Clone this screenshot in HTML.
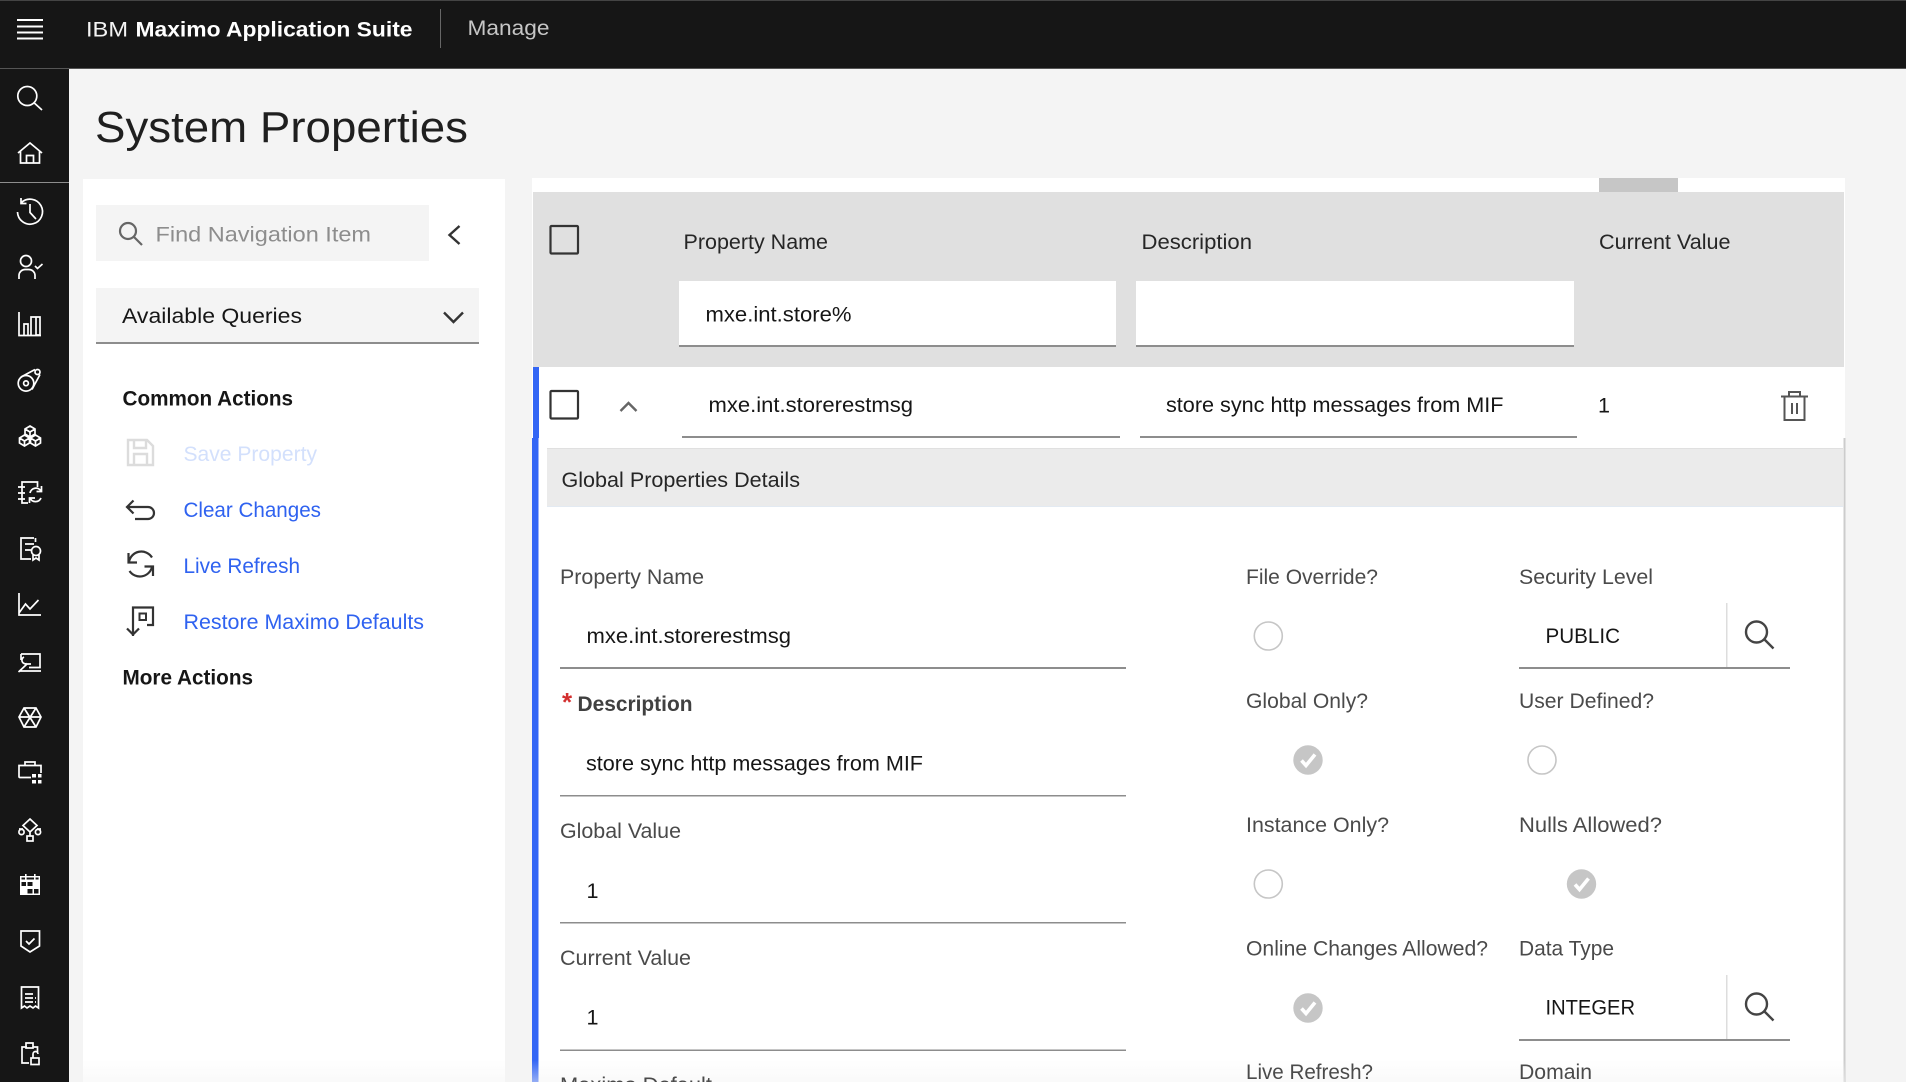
<!DOCTYPE html>
<html lang="en">
<head>
<meta charset="utf-8">
<title>System Properties</title>
<style>
html,body{margin:0;padding:0;width:1906px;height:1082px;overflow:hidden;background:#f4f4f4}
svg{display:block}
text{font-family:"Liberation Sans",Arial,sans-serif;font-size:21px;fill:#161616;white-space:pre}
.lab{fill:#4a4a4a}
.hd{fill:#262626}
.link{fill:#2f62f0}
.ic{fill:none;stroke:#fff;stroke-width:1.7;stroke-linecap:butt;stroke-linejoin:miter}
.dk{fill:none;stroke:#333;stroke-width:2.2}
.ul{fill:#8d8d8d}
.radio{fill:#fff;stroke:#c6c6c6;stroke-width:1.6}
.chk{fill:#c6c6c6}
.tick{fill:none;stroke:#fff;stroke-width:3.6}
</style>
</head>
<body>
<svg width="1906" height="1082" viewBox="0 0 1906 1082" xmlns="http://www.w3.org/2000/svg">
<defs>
<linearGradient id="fade" x1="0" y1="0" x2="0" y2="1"><stop offset="0" stop-color="#f4f4f4" stop-opacity="0"/><stop offset="1" stop-color="#f4f4f4" stop-opacity=".5"/></linearGradient>
</defs>
<rect width="1906" height="1082" fill="#f4f4f4"/>

<!-- top bar -->
<rect width="1906" height="69" fill="#161616"/>
<rect width="1906" height="1" fill="#444"/>
<rect y="68" width="1906" height="1" fill="#555"/>
<g fill="#fff"><rect x="17" y="19" width="26" height="2"/><rect x="17" y="25.500" width="26" height="2"/><rect x="17" y="31.500" width="26" height="2"/><rect x="17" y="37.500" width="26" height="2"/></g>
<text x="86" y="36.500" textLength="42" lengthAdjust="spacingAndGlyphs" style="fill:#f4f4f4">IBM</text>
<text x="135.500" y="36.500" textLength="277" lengthAdjust="spacingAndGlyphs" style="fill:#fff;font-weight:700">Maximo Application Suite</text>
<rect x="440" y="9" width="1" height="39" fill="#666"/>
<text x="467.500" y="35" textLength="82" lengthAdjust="spacingAndGlyphs" style="fill:#c6c6c6">Manage</text>

<!-- page title -->
<text x="95" y="142" textLength="373" lengthAdjust="spacingAndGlyphs" style="font-size:44px;fill:#1f1f1f">System Properties</text>

<!-- left rail -->
<rect y="69" width="69" height="1013" fill="#161616"/>
<rect y="182" width="69" height="1" fill="#8d8d8d"/>
<g class="ic">
<circle cx="27.300" cy="96" r="9.500"/><path d="M34.300 103 L42 110"/>
<path d="M18 153 L30 143 L42 153 M20.500 151 V163 H39.500 V151 M26.500 163 V155.500 H33.500 V163"/>
<path d="M21.500 202.500 A12.500 12.500 0 1 1 17.500 212 M21 198 V203.500 H26.500 M30 204 V212.500 L36 219"/>
<circle cx="26" cy="261" r="5.500"/><path d="M19 279 V275 A6 6 0 0 1 25 269.500 H29 A6 6 0 0 1 35 275 V279 M35 266 L37.500 268.500 L42.500 264"/>
<path d="M19 312 V335.500 H41 M24 335 V324 H28 V335 M31 335 V317 H36 V335 M36 335 H40 V317 H36"/>
<circle cx="26" cy="383.300" r="7.800"/><circle cx="26" cy="383.300" r="2.400"/><circle cx="37.500" cy="372" r="2.500"/><path d="M21 377 L35 369.500 M32 389.500 L40 374.500"/>
<path d="M30 426 L35 429 V434 L30 437 L25 434 V429 Z M24.500 435 L29.500 438 V443 L24.500 446 L19.500 443 V438 Z M35.500 435 L40.500 438 V443 L35.500 446 L30.500 443 V438 Z M25 429 L30 432 L35 429 M30 432 V437 M19.500 438 L24.500 441 L29.500 438 M24.500 441 V446 M30.500 438 L35.500 441 L40.500 438 M35.500 441 V446"/>
<path d="M37.500 487 V482 H22 V503 H28 M18 487 H25 M18 493 H25 M18 499 H25"/>
<path d="M30 493 A6 6 0 0 1 41 491 M41 498 A6 6 0 0 1 30 498 M36.500 491.500 H41.500 V486 M35 498 H29.500 V503"/>
<path d="M34 538 H21 V559 H31 M25 544 H34 M25 550 H31 M35.500 542 V538"/>
<circle cx="36" cy="551" r="4.500"/><path d="M33 555 V560 L36 558 L39 560 V555"/>
<path d="M19 593 V615 H41 M19 613 L25.500 604 L30 609 L38.500 600"/>
<path d="M21 654 H40 V667.500 H29 M21 654 V660 M19 671 H41 M18.500 672 L27 664 M24 657 A3.500 3.500 0 0 0 27 663.500 M27 664 L31 664"/>
<path d="M24 708 H36 L41 717 L36 727 H24 L19 717 Z M19 717 H41 M24 708 L36 727 M36 708 L24 727"/>
<path d="M31 777.500 H20 A1 1 0 0 1 19 776.500 V765.500 H41 V773 M25 765 V762 H35 V765"/>
<path d="M30 819 L37 825.500 L30 832 L23 825.500 Z M30 832 V836 M23 829 H19 M37 829 H41" />
<circle cx="21.500" cy="832" r="2.600"/><circle cx="38" cy="832" r="2.600"/><rect x="27" y="836" width="6" height="5"/>
<path d="M21 931 H39.500 V946 L30 952 L21 946 Z M26 941 L29 944 L34.500 938.500"/>
<path d="M21.500 987 H38.500 V1008 L35.500 1006 L33 1008 L30 1006 L27 1008 L24.500 1006 L21.500 1008 Z M25 994 H33 M25 998 H33 M25 1002 H33 M35 998 H36 M35 1002 H36"/>
<path d="M27 1047 H22 V1063 H29 M33 1047 H37.500 V1052 M26 1043 H33 V1048 H26 Z"/>
<rect x="31" y="1058" width="8" height="6.500"/><path d="M33 1058 V1054 A2.500 2.500 0 0 1 38 1054"/>
</g>
<g fill="#fff"><rect x="32" y="774" width="4" height="3.500"/><rect x="38" y="774" width="3.500" height="3.500"/><rect x="32" y="780" width="4" height="3.500"/><rect x="38" y="780" width="3.500" height="3.500"/></g>
<!-- calendar -->
<rect x="20" y="876" width="20" height="19" fill="#fff"/>
<rect x="25" y="874" width="1.600" height="4" fill="#fff"/><rect x="34" y="874" width="1.600" height="4" fill="#fff"/>
<g fill="#161616"><rect x="21.500" y="877.500" width="3.500" height="2"/><rect x="26.600" y="877.500" width="7.400" height="2"/><rect x="35.600" y="877.500" width="3" height="2"/><rect x="21.500" y="882" width="4.500" height="4"/><rect x="27.500" y="882" width="5" height="4"/><rect x="27.500" y="889" width="5" height="4.500"/><rect x="34" y="889" width="4.500" height="4.500"/></g>

<!-- left panel -->
<rect x="83" y="179" width="422" height="903" fill="#fff"/>
<rect x="96" y="205" width="333" height="56" fill="#f4f4f4"/>
<g fill="none" stroke="#666" stroke-width="2.200"><circle cx="128" cy="231" r="8"/><path d="M134 237 L142 245"/></g>
<text x="155.500" y="241.500" textLength="215.500" lengthAdjust="spacingAndGlyphs" style="fill:#8d8d8d">Find Navigation Item</text>
<path d="M459.500 226 L449.500 235 L459.500 244" fill="none" stroke="#333" stroke-width="2.400"/>
<rect x="96" y="288" width="383" height="54" fill="#f4f4f4"/>
<rect x="96" y="342" width="383" height="2" fill="#8d8d8d"/>
<text x="122" y="323" textLength="180" lengthAdjust="spacingAndGlyphs">Available Queries</text>
<path d="M444 312.500 L453.500 322 L463 312.500" fill="none" stroke="#333" stroke-width="2.400"/>

<text x="122.500" y="405.500" textLength="170.500" lengthAdjust="spacingAndGlyphs" style="font-weight:700">Common Actions</text>
<g fill="none" stroke="#dcdcdc" stroke-width="2.400"><path d="M128 440 H147 L153 446 V465 H128 Z M134 440 V448 H146 V440 M134 465 V454 H147 V465"/></g>
<text x="183.500" y="461" textLength="133.500" lengthAdjust="spacingAndGlyphs" style="fill:#d3e0fc">Save Property</text>
<path class="dk" d="M133.500 500.500 L127 507 L133.500 513.500 M127 507 H148 A6 6 0 0 1 148 519 H135"/>
<text class="link" x="183.500" y="517" textLength="137.500" lengthAdjust="spacingAndGlyphs">Clear Changes</text>
<path class="dk" d="M129 562 A12.500 12.500 0 0 1 152 557.500 M152 567 A12.500 12.500 0 0 1 129.500 571 M128.500 553 V562.500 H137 M153 576 V566.500 H144.500"/>
<text class="link" x="183.500" y="573" textLength="116.500" lengthAdjust="spacingAndGlyphs">Live Refresh</text>
<path class="dk" d="M133 636 V607.500 H153 V625 H147 M127 628.500 L133 634.500 L139 628.500"/>
<rect x="139.500" y="613.500" width="6.500" height="6.500" fill="none" stroke="#333" stroke-width="2"/>
<text class="link" x="183.500" y="629" textLength="240.500" lengthAdjust="spacingAndGlyphs">Restore Maximo Defaults</text>
<text x="122.500" y="684.500" textLength="130.500" lengthAdjust="spacingAndGlyphs" style="font-weight:700">More Actions</text>

<!-- right panel -->
<rect x="532" y="178" width="1313" height="904" fill="#fff"/>
<rect x="1599" y="178" width="79" height="14" fill="#c6c6c6"/>
<rect x="533" y="192" width="1311" height="175" fill="#e0e0e0"/>
<rect x="550.500" y="226" width="27.500" height="27.500" rx="1" fill="#e0e0e0" stroke="#333" stroke-width="2.200"/>
<text class="hd" x="683.500" y="249" textLength="144.500" lengthAdjust="spacingAndGlyphs">Property Name</text>
<text class="hd" x="1141.500" y="249" textLength="110.500" lengthAdjust="spacingAndGlyphs">Description</text>
<text class="hd" x="1599" y="249" textLength="131.500" lengthAdjust="spacingAndGlyphs">Current Value</text>
<rect x="679" y="281" width="437" height="64" fill="#fff"/><rect class="ul" x="679" y="345" width="437" height="2"/>
<rect x="1136" y="281" width="438" height="64" fill="#fff"/><rect class="ul" x="1136" y="345" width="438" height="2"/>
<text x="705.500" y="321.500" textLength="146" lengthAdjust="spacingAndGlyphs">mxe.int.store%</text>

<rect x="533" y="367" width="6" height="71" fill="#3366f5"/>
<rect x="550.500" y="391" width="27.500" height="27.500" rx="1" fill="#fff" stroke="#333" stroke-width="2.200"/>
<path d="M620.500 411 L628.500 403 L636.500 411" fill="none" stroke="#666" stroke-width="2.400"/>
<text x="708.500" y="412" textLength="204.500" lengthAdjust="spacingAndGlyphs">mxe.int.storerestmsg</text>
<rect class="ul" x="682" y="436" width="438" height="2"/>
<text x="1166" y="412" textLength="337.500" lengthAdjust="spacingAndGlyphs">store sync http messages from MIF</text>
<rect class="ul" x="1140" y="436" width="437" height="2"/>
<text x="1598" y="412.500" textLength="12" lengthAdjust="spacingAndGlyphs">1</text>
<path d="M1781 396.500 H1808 M1789 396 V392 H1800 V396 M1784.500 397 V420 H1804.500 V397 M1792 403 V414 M1797 403 V414" fill="none" stroke="#555" stroke-width="2"/>

<!-- details section -->
<rect x="532" y="438" width="6.500" height="644" fill="#3366f5"/>
<rect x="1843.500" y="438" width="2" height="644" fill="#ccc"/>
<rect x="547" y="448" width="1296" height="59" fill="#ebebeb"/>
<rect x="547" y="448" width="1296" height="1" fill="#e0e0e0"/>
<rect x="547" y="506" width="1296" height="1" fill="#e3eaf2"/>
<text class="hd" x="561.500" y="487" textLength="238.500" lengthAdjust="spacingAndGlyphs">Global Properties Details</text>

<text class="lab" x="560" y="584" textLength="144" lengthAdjust="spacingAndGlyphs">Property Name</text>
<text x="586.500" y="643" textLength="204.500" lengthAdjust="spacingAndGlyphs">mxe.int.storerestmsg</text>
<rect class="ul" x="560" y="667" width="566" height="2"/>
<text x="562" y="711" style="fill:#d32f2f;font-size:26px;font-weight:700">*</text>
<text x="577.500" y="711" textLength="115" lengthAdjust="spacingAndGlyphs" style="fill:#404040;font-weight:700">Description</text>
<text x="586" y="770.500" textLength="337" lengthAdjust="spacingAndGlyphs">store sync http messages from MIF</text>
<rect class="ul" x="560" y="795" width="566" height="1.500"/>
<text class="lab" x="560" y="838" textLength="121" lengthAdjust="spacingAndGlyphs">Global Value</text>
<text x="586.500" y="898" textLength="12" lengthAdjust="spacingAndGlyphs">1</text>
<rect class="ul" x="560" y="922" width="566" height="1.500"/>
<text class="lab" x="560" y="965" textLength="131" lengthAdjust="spacingAndGlyphs">Current Value</text>
<text x="586.500" y="1024.500" textLength="12" lengthAdjust="spacingAndGlyphs">1</text>
<rect class="ul" x="560" y="1049.500" width="566" height="1.500"/>

<text class="lab" x="1246" y="584" textLength="132" lengthAdjust="spacingAndGlyphs">File Override?</text>
<circle class="radio" cx="1268.300" cy="636" r="14"/>
<text class="lab" x="1519" y="584" textLength="134" lengthAdjust="spacingAndGlyphs">Security Level</text>
<text x="1545.500" y="643" textLength="74.500" lengthAdjust="spacingAndGlyphs">PUBLIC</text>
<rect x="1726" y="603" width="1.500" height="64" fill="#ddd"/>
<g fill="none" stroke="#444" stroke-width="2.400"><circle cx="1756.500" cy="632" r="10.500"/><path d="M1764.500 639.500 L1773.500 648.500"/></g>
<rect class="ul" x="1519" y="667" width="271" height="2"/>

<text class="lab" x="1246" y="708" textLength="122" lengthAdjust="spacingAndGlyphs">Global Only?</text>
<circle class="chk" cx="1308" cy="760" r="14.700"/><path class="tick" d="M1301.500 760.500 L1306 765.500 L1315 754.500"/>
<text class="lab" x="1519" y="708" textLength="135" lengthAdjust="spacingAndGlyphs">User Defined?</text>
<circle class="radio" cx="1542" cy="760" r="14"/>

<text class="lab" x="1246" y="832" textLength="143" lengthAdjust="spacingAndGlyphs">Instance Only?</text>
<circle class="radio" cx="1268.300" cy="884" r="14"/>
<text class="lab" x="1519" y="832" textLength="143" lengthAdjust="spacingAndGlyphs">Nulls Allowed?</text>
<circle class="chk" cx="1581.500" cy="884" r="14.700"/><path class="tick" d="M1575 884.500 L1579.500 889.500 L1588.500 878.500"/>

<text class="lab" x="1246" y="955.500" textLength="242" lengthAdjust="spacingAndGlyphs">Online Changes Allowed?</text>
<circle class="chk" cx="1308" cy="1008" r="14.700"/><path class="tick" d="M1301.500 1008.500 L1306 1013.500 L1315 1002.500"/>
<text class="lab" x="1519" y="955.500" textLength="95" lengthAdjust="spacingAndGlyphs">Data Type</text>
<text x="1545.500" y="1014.500" textLength="89.500" lengthAdjust="spacingAndGlyphs">INTEGER</text>
<rect x="1726" y="975" width="1.500" height="64" fill="#ddd"/>
<g fill="none" stroke="#444" stroke-width="2.400"><circle cx="1756.500" cy="1004" r="10.500"/><path d="M1764.500 1011.500 L1773.500 1020.500"/></g>
<rect class="ul" x="1519" y="1039" width="271" height="2"/>

<rect x="83" y="1060" width="1762" height="22" fill="url(#fade)"/>
<text class="lab" x="560" y="1092" textLength="152" lengthAdjust="spacingAndGlyphs">Maximo Default</text>
<text class="lab" x="1246" y="1079" textLength="127" lengthAdjust="spacingAndGlyphs">Live Refresh?</text>
<text class="lab" x="1519" y="1079" textLength="73" lengthAdjust="spacingAndGlyphs">Domain</text>
</svg>
</body>
</html>
